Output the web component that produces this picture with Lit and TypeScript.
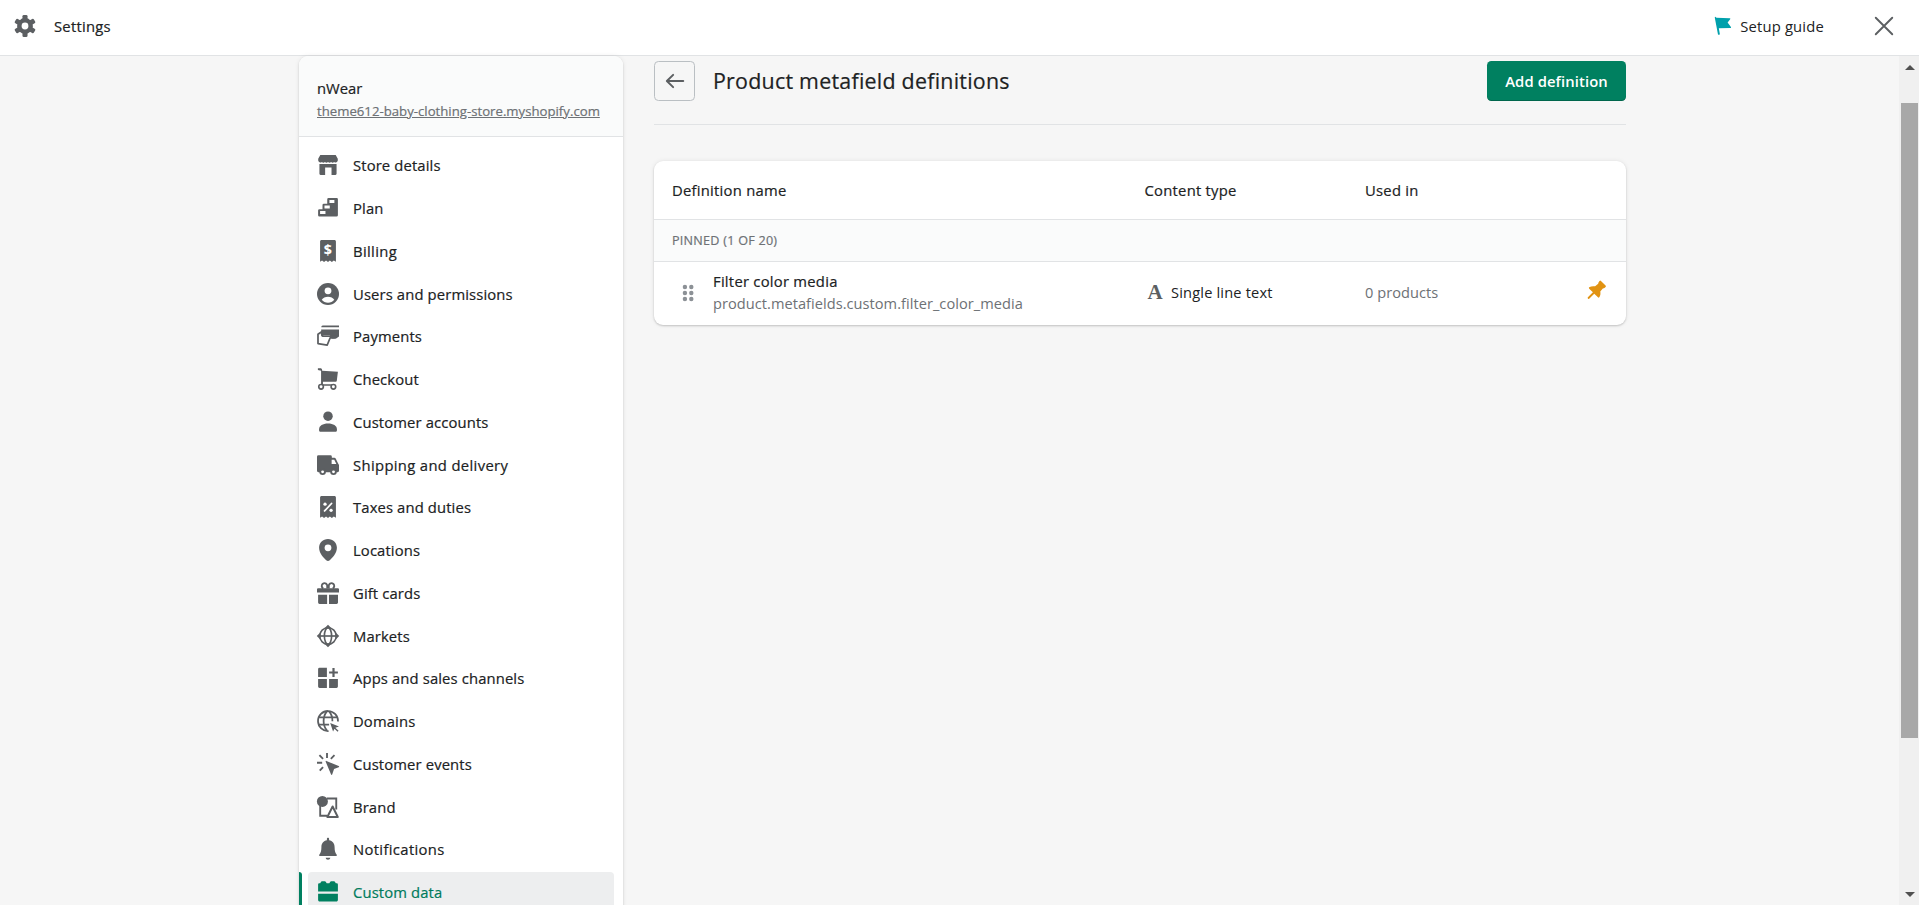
import { LitElement, html, svg, css } from "lit";
import { customElement } from "lit/decorators.js";

const receipt = svg`<path d="M4.100 0h11.800c.7 0 1.300.6 1.300 1.300v18.400l-1.900-1.100-1.800 1.300-1.800-1.300-1.700 1.300-1.800-1.300-1.800 1.300-1.800-1.300-1.800 1.100V1.300C2.800.6 3.400 0 4.100 0z"/>`;

const icons: Record<string, unknown> = {
  gear: svg`<circle cx="10" cy="10" r="7.200"/><g>${[0, 60, 120].map(
    (a) => svg`<rect x="7.700" y="0" width="4.600" height="20" rx="1.200" transform="rotate(${a} 10 10)"/>`
  )}</g><circle cx="10" cy="10" r="3.100" fill="#fff"/>`,
  store: svg`<path d="M3 1h14l1.900 3.400v1.500a2 2 0 0 1-3.300 1.300 2 2 0 0 1-2.800 0 2 2 0 0 1-2.800 0 2 2 0 0 1-2.800 0 2 2 0 0 1-2.800 0A2 2 0 0 1 1.100 5.900V4.400z"/><path d="M2.200 9h15.600v9a1 1 0 0 1-1 1h-3.600v-6.800H7.400V19H3.200a1 1 0 0 1-1-1z"/>`,
  plan: svg`<path fill-rule="evenodd" d="M10.500 1H18a1 1 0 0 1 1 1v14.500a1.300 1.300 0 0 1-1.300 1.300H2.200A1.200 1.200 0 0 1 1 16.600v-4.300a1.200 1.200 0 0 1 1.200-1.200H5V7.300A1.200 1.200 0 0 1 6.200 6.100h3.100V2.200A1.200 1.200 0 0 1 10.500 1zM11.300 2.700v2.800h4.500V2.700zM6.800 7.700v2.800h4.800V7.700zM2.800 12.700v2.800h4.900v-2.800z"/>`,
  billing: svg`${receipt}<text x="10" y="14" font-family="Open Sans, sans-serif" font-weight="700" font-size="13" text-anchor="middle" fill="#fff">$</text>`,
  users: svg`<circle cx="10" cy="10" r="10"/><circle cx="10" cy="7.100" r="3.100" fill="#fff"/><path fill="#fff" d="M4.300 15.300c1.200-1.700 3.200-2.700 5.700-2.700s4.500 1 5.700 2.700C14.300 17 12.300 18 10 18s-4.300-1-5.700-2.700z"/>`,
  payments: svg`<path d="M5.200.5H20V2.100H3.900A1.500 1.500 0 0 1 5.200.5zM3.800 4.200H20v6.300l-2.600 1.700h-3.800L11.500 9H3.800z"/><path fill="#fff" stroke="currentColor" stroke-width="1.600" stroke-linejoin="round" d="M4.300 6.200.9 8.500v8.400l8.400 1.300 2.600-6.400h3.700c1.400 0 2-.7 1.900-1.600H6.200c-1.200 0-1.900-.8-1.900-1.800z"/>`,
  checkout: svg`<path d="M.8.2h2.300c.8 0 1.400.5 1.500 1.300l.1.900 14.300.9-1 8.200a1 1 0 0 1-1 .9H5.400v2.400H16v1.400H3.700V2.600L.8 1.800z"/><circle cx="3.700" cy="17.100" r="2.100" fill="#fff" stroke="currentColor" stroke-width="1.500"/><circle cx="14.900" cy="17.100" r="2.100" fill="#fff" stroke="currentColor" stroke-width="1.500"/>`,
  person: svg`<circle cx="10" cy="4.700" r="4.300"/><path d="M1.900 16.500c0-3 3.300-5.100 8.100-5.100s8.100 2.100 8.100 5.100v.9c0 .9-.6 1.500-1.500 1.500H3.400c-.9 0-1.500-.6-1.500-1.500z"/>`,
  truck: svg`<path fill-rule="evenodd" d="M1.300 1.200h10.900a1.300 1.300 0 0 1 1.300 1.300v1h2.300c.6 0 1 .3 1.300.8l2 4 .9 1.800v5.200a1.300 1.300 0 0 1-1.300 1.300H1.300A1.300 1.300 0 0 1 0 15.300V2.500a1.300 1.300 0 0 1 1.300-1.300zM13.300 5.200v4h4.300l-1.900-4z"/><circle cx="5.100" cy="16.200" r="3"/><circle cx="15" cy="16.200" r="3"/><circle cx="5.100" cy="16.200" r="1.300" fill="#fff"/><circle cx="15" cy="16.200" r="1.300" fill="#fff"/>`,
  taxes: svg`${receipt}<path stroke="#fff" stroke-width="1.600" stroke-linecap="round" d="m6.900 13.600 6.300-6.800"/><circle cx="7.300" cy="7.400" r="1.500" fill="#fff"/><circle cx="12.800" cy="13" r="1.500" fill="#fff"/>`,
  pinpoint: svg`<path fill-rule="evenodd" d="M10 0c4.600 0 8.100 3.400 8.100 8 0 5.200-4.200 9.200-6.500 11.400-.9.800-2.300.8-3.200 0C6.100 17.200 1.900 13.200 1.900 8c0-4.600 3.500-8 8.100-8zm0 4.900a3.100 3.100 0 1 0 0 6.200 3.100 3.100 0 0 0 0-6.200z"/>`,
  gift: svg`<path fill="none" stroke="currentColor" stroke-width="1.700" d="M9.300 6V3.300a2.500 2.500 0 1 0-4.600 1.600L5.500 6M10.700 6V3.300a2.500 2.500 0 1 1 4.600 1.600L14.500 6"/><path d="M1 5.600h18a1 1 0 0 1 1 1v3H0v-3a1 1 0 0 1 1-1zM1 11.700h8.200V20H2.300A1.300 1.300 0 0 1 1 18.700zM10.900 11.700h8.200v7a1.300 1.300 0 0 1-1.300 1.300h-6.900z"/>`,
  markets: svg`<g fill="none" stroke="currentColor" stroke-width="1.500"><circle cx="10" cy="10" r="7.500"/><ellipse cx="10" cy="10" rx="3.300" ry="7.500"/><path d="M2 10h16"/></g><path d="M10-.2 13.200 3H6.800zM10 20.200 6.800 17h6.400zM-.2 10 3 6.800v6.400zM20.200 10 17 13.200V6.800z"/>`,
  apps: svg`<path d="M2.300.7H9V9H1V2A1.300 1.300 0 0 1 2.300.7zM1 11h8v8H2.300A1.300 1.300 0 0 1 1 17.700zM11 11h8v6.700a1.300 1.300 0 0 1-1.300 1.300H11zM14 1h2v3h3v2h-3v3h-2V6h-3V4h3z"/>`,
  domains: svg`<g fill="none" stroke="currentColor" stroke-width="1.600"><path d="M10.500 19.100A9.100 9.100 0 1 1 19.100 10.500"/><path d="M9 18.500C5 14 5 6 9 1.300M11 1.300c2.300 2.700 3.100 6 3 9M1.500 6.700h17M1.500 13.300h9.500"/></g><path d="m12 11.900 8 3-3.300 1.300 2.900 2.700-.9.900-2.800-2.800-1.300 2.600z"/>`,
  events: svg`<path fill="none" stroke="currentColor" stroke-width="1.700" d="M9.100 0v4.600M2.200 2l3.300 3.300M15.900 2l-3.300 3.300M0 8.900h4.700M2.500 16l3-3.200"/><path d="M8.500 7.200 19.700 11.900c.6.300.6.800 0 1.100l-4.200 1.600-1.700 5c-.2.500-.8.500-1 0L7.900 7.900c-.2-.5.1-.9.600-.7z"/>`,
  brand: svg`<path fill="none" stroke="currentColor" stroke-width="1.700" d="M9 2.300h8.500v10M2.900 9v9h6.300"/><circle cx="4.900" cy="4.900" r="5"/><path fill="none" stroke="currentColor" stroke-width="1.800" stroke-linejoin="round" d="m14.200 9.500 4.700 9.600H9.400z"/>`,
  bell: svg`<path d="M10-.2c.6 0 1 .4 1 1v1.300c3.100.5 5 3 5 6.200 0 3.300.7 5.300 1.800 6.700.5.700.2 1.400-.6 1.400H2.800c-.8 0-1.100-.7-.6-1.400C3.300 13.600 4 11.600 4 8.300c0-3.200 1.900-5.700 5-6.200V.8c0-.6.4-1 1-1zM7.900 18h4.200c-.1 1.200-.9 1.800-2.100 1.800S8 19.200 7.900 18z"/>`,
  data: svg`<path d="M1 3.300c0-.7.5-1.200 1.200-1.200h.7L3.600.9c.2-.4.5-.6.9-.6h2.600c.4 0 .8.2 1 .6l.7 1.200h2.400L11.900.9c.2-.4.6-.6 1-.6h2.600c.4 0 .7.200.9.600l.7 1.200h.7c.7 0 1.200.5 1.200 1.200v6.300H1zM1 11.600h18v5.600c0 .8-.6 1.400-1.400 1.400H2.400c-.8 0-1.400-.6-1.400-1.400z"/>`,
  back: svg`<path fill="none" stroke="currentColor" stroke-width="1.800" stroke-linecap="round" stroke-linejoin="round" d="M17.500 10H2.800M8.300 4.400 2.600 10l5.700 5.600"/>`,
  close: svg`<path fill="none" stroke="currentColor" stroke-width="1.700" stroke-linecap="round" d="m2.500 2.500 15 15M17.500 2.500l-15 15"/>`,
  flag: svg`<path d="M2.500 2.200a.6.600 0 0 1 1-.2l.6.500L16 2.900c.6 0 .8.500.5.900l-2.300 3 3 4.200c.3.500 0 .9-.5.900L6.200 12l1 5.800-1.700.2z"/>`,
  drag: svg`${[4.500, 10, 15.500].map(
    (y) => svg`<circle cx="7.200" cy="${y}" r="2"/><circle cx="13" cy="${y}" r="2"/>`
  )}`,
  pushpin: svg`<path d="M13.200 1.800a.9.900 0 0 1 1.300 0l4.200 4.200a.9.900 0 0 1 0 1.300l-.7.600c-.5.500-1.100.7-1.800.8l-2.300 2.600c.4 1.900.1 3.900-.9 5.400-.3.400-.8.400-1.200 0l-3.400-3.400-4.600 4.600c-.7.700-1.900-.4-1.200-1.200l4.600-4.600-3.400-3.300c-.4-.4-.4-.9 0-1.200 1.500-1 3.600-1.300 5.400-.9L12 4.400c0-.7.200-1.300.7-1.800z"/>`,
};

const icon = (name: string, cls = "icon") =>
  html`<svg class=${cls} viewBox="0 0 20 20" fill="currentColor" aria-hidden="true">${icons[name]}</svg>`;

const NAV: [string, string, string?][] = [
  ["store", "Store details"],
  ["plan", "Plan"],
  ["billing", "Billing", "loose"],
  ["users", "Users and permissions"],
  ["payments", "Payments"],
  ["checkout", "Checkout"],
  ["person", "Customer accounts"],
  ["truck", "Shipping and delivery", "loose"],
  ["taxes", "Taxes and duties"],
  ["pinpoint", "Locations"],
  ["gift", "Gift cards"],
  ["markets", "Markets"],
  ["apps", "Apps and sales channels"],
  ["domains", "Domains"],
  ["events", "Customer events"],
  ["brand", "Brand"],
  ["bell", "Notifications", "loose"],
  ["data", "Custom data"],
];

@customElement("app-root")
export class AppRoot extends LitElement {
  static styles = css`
    :host {
      display: flex;
      flex-direction: column;
      height: 905px;
      overflow: hidden;
      background: #f6f6f6;
      color: #202223;
      font: 400 14.8px/22px "Open Sans", "Noto Sans", sans-serif;
    }
    * { box-sizing: border-box; }
    svg { display: block; overflow: visible; flex: none; }
    .icon { width: 22px; height: 22px; color: #5c5f62; }
    .medium { -webkit-text-stroke: 0.2px currentColor; letter-spacing: 0.25px; }
    .top {
      flex: none;
      height: 56px;
      display: flex;
      align-items: center;
      padding: 0 24px 4px 14px;
      background: #fff;
      border-bottom: 1px solid #e1e3e5;
    }
    .top .name { margin-left: 18px; flex: 1; }
    .setup { display: flex; align-items: center; gap: 6.5px; letter-spacing: 0.18px; margin-right: 49px; }
    .setup .icon { color: #00a0ac; }
    .body { flex: 1; min-height: 0; display: flex; }
    .page { flex: 1; display: flex; padding-left: 299px; gap: 31px; align-items: flex-start; }
    .side {
      width: 324px;
      height: 900px;
      background: #fff;
      border-radius: 9px 9px 0 0;
      box-shadow: 0 0 5px rgba(23, 24, 24, 0.08), 0 1px 2px rgba(0, 0, 0, 0.15);
      overflow: hidden;
    }
    .shop { height: 81px; padding: 21px 18px 0; background: #fafbfb; border-bottom: 1px solid #e1e3e5; }
    .shop .medium { letter-spacing: 0; }
    .url { padding-top: 1px; font-size: 13.2px; white-space: nowrap; color: #6d7175; text-decoration: underline; }
    .nav { padding: 8.6px 9px 0 0; display: flex; flex-direction: column; gap: 2px; }
    .row { display: flex; height: 40.75px; }
    .bar { width: 3px; margin-right: 6px; border-radius: 0 3px 3px 0; }
    .item {
      flex: 1; display: flex; align-items: center; gap: 14px; padding: 0 0 1px 9px; border-radius: 4px;
      letter-spacing: 0.13px;
    }
    .item.loose { letter-spacing: 0.35px; }
    .on .bar { background: #008060; }
    .on .item { background: #edeeef; color: #007b5c; }
    .on .icon { color: #008060; }
    .main { width: 972px; padding-top: 5px; }
    .head { display: flex; align-items: center; height: 64px; padding-bottom: 23px; border-bottom: 1px solid #e1e3e5; }
    .backbtn { width: 41px; height: 40px; border: 1px solid #babfc3; border-radius: 4.4px; display: grid; place-items: center; }
    .title { flex: 1; margin-left: 18px; font-size: 21.4px; line-height: 30px; }
    .add {
      width: 139px; height: 40px; display: grid; place-items: center;
      background: #008060; color: #fff; font-weight: 600; border-radius: 4.4px; letter-spacing: 0.1px;
      box-shadow: inset 0 -1px 0 rgba(0, 0, 0, 0.2);
    }
    .card {
      margin-top: 36px;
      height: 164px;
      background: #fff;
      border-radius: 9px;
      overflow: hidden;
      box-shadow: 0 0 5px rgba(23, 24, 24, 0.08), 0 1px 2px rgba(0, 0, 0, 0.18);
    }
    .cols { display: grid; grid-template-columns: 472.5px 220.5px 1fr 46px; padding-left: 18px; align-items: center; }
    .th { height: 59px; border-bottom: 1px solid #e1e3e5; }
    .group {
      height: 42px; padding: 0 18px; line-height: 41px; background: #fafbfb; border-bottom: 1px solid #e1e3e5;
      font-size: 12.6px; color: #6d7175;
    }
    .tr { height: 60px; font-size: 14.6px; }
    .def { display: flex; align-items: center; }
    .def .icon { color: #8c9196; margin: 2px 14px 0 5px; }
    .def strong { display: block; font-weight: 400; font-size: 14.8px; }
    .dim { color: #6d7175; letter-spacing: 0.04px; }
    .type { display: flex; align-items: center; letter-spacing: 0.18px; }
    .glyph { width: 26.5px; padding-left: 3px; font: 700 21px/22px "Liberation Serif", serif; color: #5c5f62; }
    .cols .pin { color: #e19313; margin: 0 0 5px 5px; }
    .scroll { width: 20px; background: #f0f0f0; display: flex; flex-direction: column; align-items: center; padding: 9px 0 8px 1px; }
    .up, .down { border: 5px solid transparent; border-top-width: 0; border-bottom: 5px solid #505050; }
    .down { border-bottom-width: 0; border-top: 5px solid #505050; }
    .thumb { width: 17px; height: 635px; margin: 33px 0 auto; background: #a8a8a8; }
  `;

  render() {
    return html`
      <header class="top">
        ${icon("gear")}
        <span class="name medium">Settings</span>
        <span class="setup">${icon("flag")}<span>Setup guide</span></span>
        ${icon("close")}
      </header>
      <div class="body">
        <div class="page">
          <aside class="side">
            <div class="shop">
              <div class="medium">nWear</div>
              <div class="url medium">theme612-baby-clothing-store.myshopify.com</div>
            </div>
            <nav class="nav">
              ${NAV.map(
                ([i, label, fit = ""]) => html`<div class="row ${i === "data" ? "on" : ""}">
                  <span class="bar"></span><a class="medium item ${fit}">${icon(i)}<span>${label}</span></a>
                </div>`
              )}
            </nav>
          </aside>
          <main class="main">
            <div class="head">
              <span class="backbtn">${icon("back")}</span>
              <span class="title medium">Product metafield definitions</span>
              <span class="add">Add definition</span>
            </div>
            <section class="card">
              <div class="cols th medium"><span>Definition name</span><span>Content type</span><span>Used in</span></div>
              <div class="group medium">PINNED (1 OF 20)</div>
              <div class="cols tr">
                <div class="def">
                  ${icon("drag")}
                  <div><strong class="medium">Filter color media</strong><span class="dim">product.metafields.custom.filter_color_media</span></div>
                </div>
                <div class="type"><span class="glyph">A</span><span>Single line text</span></div>
                <span class="dim">0 products</span>
                ${icon("pushpin", "icon pin")}
              </div>
            </section>
          </main>
        </div>
        <div class="scroll"><i class="up"></i><i class="thumb"></i><i class="down"></i></div>
      </div>
    `;
  }
}
